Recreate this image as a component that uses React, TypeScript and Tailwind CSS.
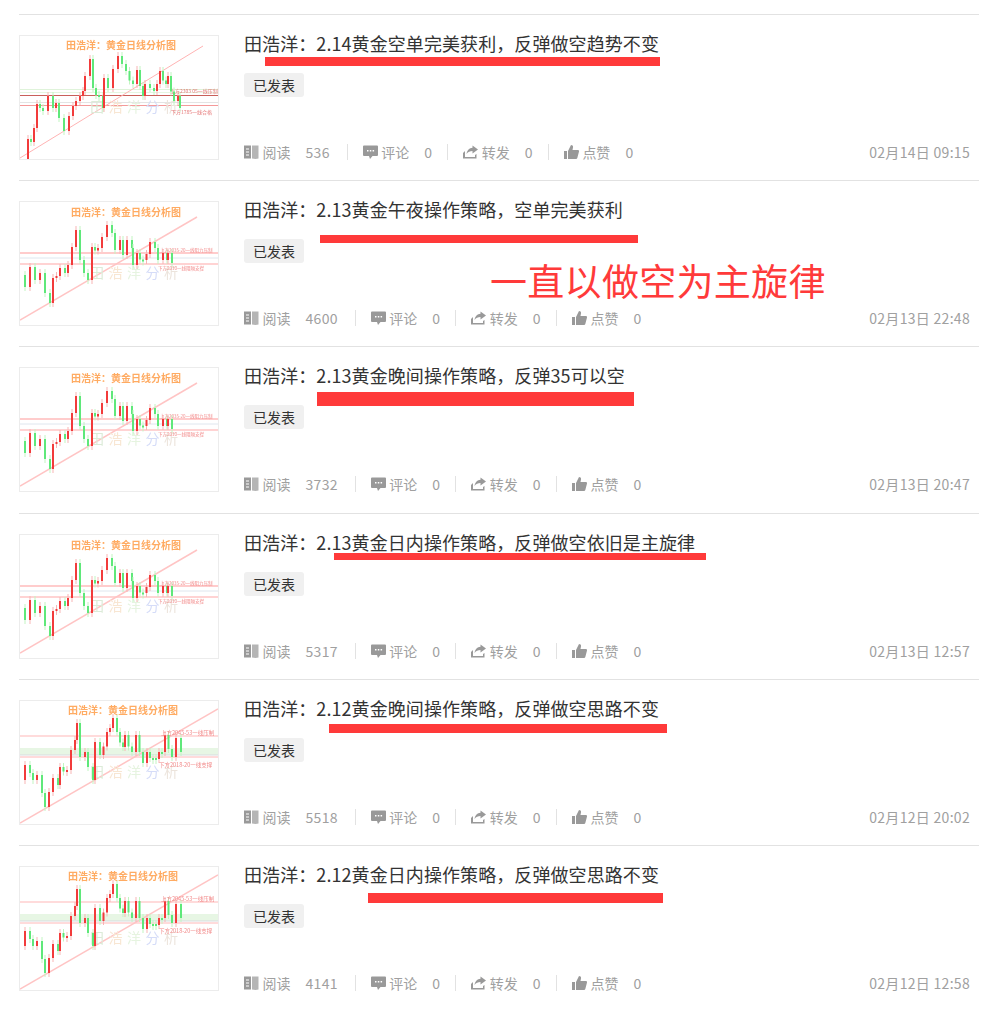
const paths: Record<string, number[][]> = {
  a: [[3,123],[8,103],[11,106],[14,92],[17,68],[20,72],[23,75],[28,60],[33,72],[36,67],[39,82],[44,95],[49,80],[53,70],[56,65],[60,60],[63,55],[65,40],[70,23],[73,52],[79,60],[83,72],[84,42],[88,52],[93,33],[98,20],[102,28],[106,35],[113,48],[117,34],[123,60],[125,48],[130,52],[134,55],[140,35],[146,48],[148,40],[154,65],[158,60],[160,72]],
  b: [[0,73],[5,85],[10,65],[15,78],[20,71],[25,91],[30,101],[33,76],[40,66],[45,71],[48,63],[52,45],[56,28],[60,58],[68,78],[72,45],[78,46],[82,35],[87,23],[92,31],[95,48],[100,38],[103,53],[107,38],[112,46],[113,63],[117,51],[123,58],[130,40],[135,46],[138,58],[143,51],[147,58],[148,51],[152,61]],
  c: [[0,79],[5,64],[10,72],[13,79],[17,74],[22,92],[25,106],[29,91],[33,77],[38,84],[40,66],[47,69],[51,49],[55,39],[57,22],[60,56],[65,51],[68,66],[73,79],[75,41],[80,54],[87,31],[93,17],[97,31],[103,46],[105,34],[112,51],[116,34],[123,62],[127,51],[133,57],[142,51],[145,34],[152,56],[156,37],[161,51]],
}

// fill long segments so the candles sit as close as in the picture
const dense = (pts: number[][]) => {
  const out: number[][] = [pts[0]]
  for (let i = 1; i < pts.length; i++) {
    const [x0, y0] = pts[i - 1]
    const [x1, y1] = pts[i]
    const n = Math.max(1, Math.round((x1 - x0) / 3.6))
    for (let k = 1; k <= n; k++) {
      const wob = k < n ? (k % 2 ? 3 : -2) : 0
      out.push([x0 + ((x1 - x0) * k) / n, y0 + ((y1 - y0) * k) / n + wob])
    }
  }
  return out
}

const cjk = "'Noto Sans CJK SC', sans-serif"

const Chart = ({ type }: { type: string }) => {
  const pts = dense(paths[type])
  const titleX = type === 'a' ? 46 : type === 'b' ? 51 : 48
  const titleY = type === 'a' ? 13 : type === 'b' ? 14 : 13
  return (
    <div className="w-[200px] h-[125px] shrink-0 border border-[#ececec] bg-white overflow-hidden">
      <svg width="198" height="123" viewBox="0 0 198 123" className={type === 'a' ? 'blur-[0.3px]' : 'blur-[0.5px]'}>
        {type === 'a' ? (
          <>
            <rect x="0" y="53" width="198" height="1" fill="#dff3da" />
            <rect x="0" y="56" width="198" height="1" fill="#e6f6e2" />
            <line x1="0" y1="59.500" x2="198" y2="59.500" stroke="#c9605a" strokeWidth="1" />
            <line x1="0" y1="66.500" x2="198" y2="66.500" stroke="#e4e4e4" strokeWidth="1" />
            <line x1="0" y1="69.500" x2="198" y2="69.500" stroke="#f59a9a" strokeWidth="1" />
            <line x1="0" y1="122" x2="183" y2="10" stroke="#ffb3b3" strokeWidth="1" />
          </>
        ) : type === 'b' ? (
          <>
            <line x1="0" y1="51" x2="198" y2="51" stroke="#ffcccc" strokeWidth="2" />
            <line x1="0" y1="56" x2="198" y2="56" stroke="#dfe6ee" strokeWidth="1" />
            <line x1="0" y1="62" x2="198" y2="62" stroke="#ffc4c4" strokeWidth="1.500" />
            <line x1="0" y1="118" x2="177" y2="15" stroke="#ffc4c4" strokeWidth="1.500" />
          </>
        ) : (
          <>
            <rect x="0" y="47" width="198" height="7" fill="#e7f6e4" />
            <line x1="0" y1="35" x2="198" y2="35" stroke="#ffb8b8" strokeWidth="1.200" />
            <line x1="0" y1="54" x2="198" y2="54" stroke="#d8dde0" strokeWidth="1" />
            <line x1="0" y1="56" x2="198" y2="56" stroke="#ffb8b8" strokeWidth="1.200" />
            <line x1="0" y1="122" x2="198" y2="8" stroke="#ffc4c4" strokeWidth="1.500" />
          </>
        )}
        <text x="70" y="76" fontSize="14" letterSpacing="4.500" fontFamily={cjk}>
          <tspan fill="#dcebd8">田</tspan>
          <tspan fill="#f8e6d2">浩</tspan>
          <tspan fill="#e6f4e0">洋</tspan>
          <tspan fill="#d5dcf8">分</tspan>
          <tspan fill="#ece4dc">析</tspan>
        </text>
        {pts.map((p, i) => {
          if (i === 0) return null
          const prev = pts[i - 1]
          const up = p[1] < prev[1]
          const top = Math.min(p[1], prev[1])
          const h = Math.max(Math.abs(p[1] - prev[1]), 2)
          return (
            <g key={i}>
              <line x1={p[0]} y1={top - 4} x2={p[0]} y2={top + h + 4} stroke={up ? '#f7b5b5' : '#c2f5c2'} strokeWidth="1" />
              <rect x={p[0] - 1} y={top} width="2" height={h} fill={up ? '#f23b3b' : '#5fe87a'} />
            </g>
          )
        })}
        <text x={titleX} y={titleY} fontSize="10" fontWeight="700" fill="#ffab62" fontFamily={cjk}>田浩洋：黄金日线分析图</text>
        {type === 'a' ? (
          <>
            <text x="150" y="57" fontSize="5" fill="#e57878" fontFamily={cjk}>上方2303 05一线压制</text>
            <text x="151" y="78" fontSize="5" fill="#e57878" fontFamily={cjk}>下方1785一线合格</text>
          </>
        ) : type === 'b' ? (
          <>
            <text x="140" y="50" fontSize="4.500" fill="#f28a8a" fontFamily={cjk}>上方2035-20一线阻力压制</text>
            <text x="138" y="68" fontSize="4.500" fill="#f28a8a" fontFamily={cjk}>下方2010一线阻隔支撑</text>
          </>
        ) : (
          <>
            <text x="141" y="34" fontSize="5.500" fill="#f28a8a" fontFamily={cjk}>上方2045-53一线压制</text>
            <text x="139" y="66" fontSize="5.500" fill="#f28a8a" fontFamily={cjk}>下方2018-20一线支撑</text>
          </>
        )}
      </svg>
    </div>
  )
}

const BookIcon = () => (
  <svg width="15" height="14" viewBox="0 0 15 14">
    <path d="M0 0.500h7v13H0z" fill="#999" />
    <path d="M8 0.500h6.500v13l-3 .5-3.500-.5z" fill="#b5b5b5" />
    <path d="M2 3.500h3v1H2zM2 6.500h3v1H2zM2 9.500h3v1H2z" fill="#fff" />
  </svg>
)

const CommentIcon = () => (
  <svg width="15" height="14" viewBox="0 0 15 14" fill="#999">
    <path d="M1 0.500h13a1 1 0 0 1 1 1v8.500a1 1 0 0 1-1 1H9.500L7 14l-1-3H1a1 1 0 0 1-1-1V1.500a1 1 0 0 1 1-1z" />
    <path d="M4 5h1.500v1.500H4zM6.800 5h1.500v1.500H6.800zM9.600 5h1.500v1.500H9.600z" fill="#fff" />
  </svg>
)

const ShareIcon = () => (
  <svg width="15" height="14" viewBox="0 0 15 14" fill="#999">
    <path d="M9.500 0.500l5.500 4-5.500 4V6C7 6 5 6.800 3.500 9c.5-4 3-6 6-6.300z" />
    <path d="M0 8 2 6v6h10v-2l1.500-1v4.500H0z" />
  </svg>
)

const LikeIcon = () => (
  <svg width="15" height="14" viewBox="0 0 15 14" fill="#999">
    <path d="M0 6h3v8H0zM4 6l3-6c1.500 0 2.300 1 2 2.500L8.500 5H14c.8 0 1.200.7 1 1.500l-1.700 6.500c-.2.600-.6 1-1.300 1H4z" />
  </svg>
)

const Stat = ({ icon, label, count, first }: { icon: React.ReactNode; label: string; count: number; first?: boolean }) => (
  <div className={first ? 'flex items-center h-[14px] pr-[2px]' : 'flex items-center h-[14px]'}>
    {!first && <span className="w-px h-[16px] bg-[#e2e2e2] mx-[15px]" />}
    {icon}
    <span className="ml-[3.5px]">{label}</span>
    <span className="ml-[15px] tracking-[0.3px]">{count}</span>
  </div>
)

const rows = [
  { title: '田浩洋：2.14黄金空单完美获利，反弹做空趋势不变', read: 536, date: '02月14日 09:15', chart: 'a', bar: 'left-[246px] w-[395px] top-[42px] h-[9px]' },
  { title: '田浩洋：2.13黄金午夜操作策略，空单完美获利', read: 4600, date: '02月13日 22:48', chart: 'b', bar: 'left-[301px] w-[318px] top-[54px] h-[8px]' },
  { title: '田浩洋：2.13黄金晚间操作策略，反弹35可以空', read: 3732, date: '02月13日 20:47', chart: 'b', bar: 'left-[298px] w-[317px] top-[45px] h-[14px]' },
  { title: '田浩洋：2.13黄金日内操作策略，反弹做空依旧是主旋律', read: 5317, date: '02月13日 12:57', chart: 'b', bar: 'left-[315px] w-[372px] top-[39px] h-[7px]' },
  { title: '田浩洋：2.12黄金晚间操作策略，反弹做空思路不变', read: 5518, date: '02月12日 20:02', chart: 'c', bar: 'left-[310px] w-[338px] top-[44px] h-[9px]' },
  { title: '田浩洋：2.12黄金日内操作策略，反弹做空思路不变', read: 4141, date: '02月12日 12:58', chart: 'c', bar: 'left-[349px] w-[295px] top-[47px] h-[10px]' },
]

export default function App() {
  return (
    <div className="relative w-[998px] h-[1010px] overflow-hidden bg-white pt-[14px] px-[19px] font-['Noto_Sans_CJK_SC',sans-serif]">
      {rows.map((r, i) => (
        <div key={i} className="relative flex gap-[25px] h-[166.2px] border-t border-[#e2e2e2] pt-[20px]">
          <Chart type={r.chart} />
          <div className="flex flex-col flex-1 h-[125px]">
            <h2 className="text-[18px] leading-[18px] -mt-px tracking-[0.08px] text-[#333] font-normal">{r.title}</h2>
            <div className="mt-[21px] flex">
              <span className="h-[24px] leading-[24px] px-[9px] bg-[#f0f0f0] rounded-[3px] text-[14px] text-[#333]">已发表</span>
            </div>
            <div className="mt-auto mb-px flex items-center justify-between pr-[9px] text-[14px] leading-[14px] text-[#a0a0a0]">
              <div className="flex items-center">
                <Stat first icon={<BookIcon />} label="阅读" count={r.read} />
                <Stat icon={<CommentIcon />} label="评论" count={0} />
                <Stat icon={<ShareIcon />} label="转发" count={0} />
                <Stat icon={<LikeIcon />} label="点赞" count={0} />
              </div>
              <span className="tracking-[0.3px]">{r.date}</span>
            </div>
          </div>
          <div className={`absolute bg-[#ff3a3a] ${r.bar}`} />
          {i === 1 && (
            <div className="absolute left-[471px] top-[77px] text-[37px] leading-[44px] tracking-[0.3px] text-[#ff3a3a] whitespace-nowrap">一直以做空为主旋律</div>
          )}
        </div>
      ))}
    </div>
  )
}
